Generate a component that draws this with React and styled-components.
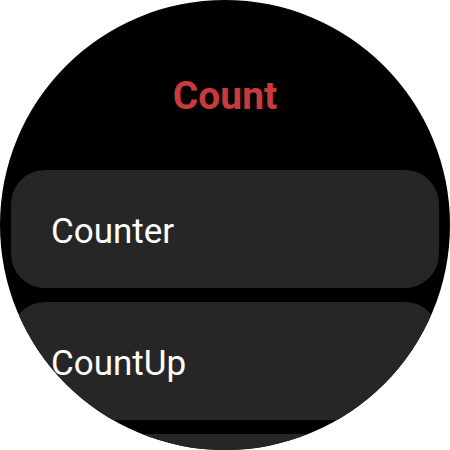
import React from "react";
import styled, { createGlobalStyle } from "styled-components";

const Global = createGlobalStyle`
  html, body { margin: 0; padding: 0; background: #ffffff; }
  body { font-family: Roboto, "Noto Sans", sans-serif; }
`;

const Screen = styled.div`
  width: 450px;
  height: 450px;
  border-radius: 50%;
  background: #000000;
  overflow: hidden;
  display: flex;
  flex-direction: column;
  align-items: stretch;
  padding-top: 70px;
  box-sizing: border-box;
`;

const Title = styled.h1`
  margin: 0;
  height: 52px;
  line-height: 52px;
  text-align: center;
  font-family: Roboto, sans-serif;
  font-weight: 700;
  font-size: 39px;
  color: #c93a3b;
`;

const List = styled.div`
  display: flex;
  flex-direction: column;
  gap: 14px;
  padding: 0 11px;
  margin-top: 48px;
`;

const Chip = styled.div`
  flex: none;
  height: 118px;
  box-sizing: border-box;
  border-radius: 34px;
  background: #262626;
  display: flex;
  align-items: center;
  padding-left: 40px;
  padding-top: 4px;
  font-family: Roboto, sans-serif;
  font-size: 35px;
  color: #ffffff;
`;

const items = ["Counter", "CountUp", ""];

export default function App() {
  return (
    <>
      <Global />
      <Screen>
        <Title>Count</Title>
        <List>
          {items.map((label, i) => (
            <Chip key={i}>{label}</Chip>
          ))}
        </List>
      </Screen>
    </>
  );
}
